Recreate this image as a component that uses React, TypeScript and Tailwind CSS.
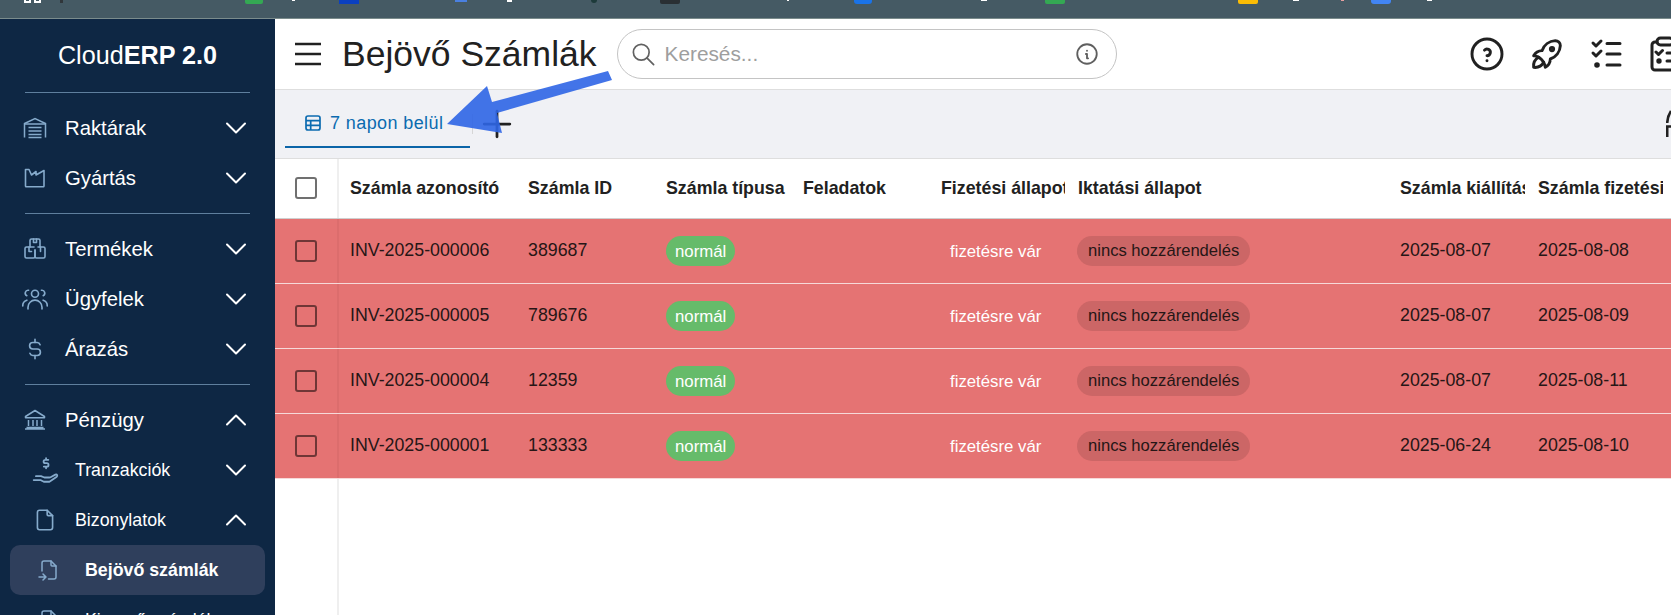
import React from 'react';
import { ChevronDown, ChevronUp } from 'lucide-react';
import {
  TbCurrencyDollar,
  TbFile,
  TbFileImport,
  TbHelpCircle,
  TbInfoCircle,
  TbPlus,
  TbRocket,
  TbSearch,
} from 'react-icons/tb';

const WarehouseIcon = () => (
  <svg width="24" height="24" viewBox="0 0 24 24" fill="none" stroke="currentColor" strokeWidth="1.5">
    <path d="M1.5 21.500V7.500L12 2.500l10.500 5v14" />
    <path d="M1.500 8h21M5.500 11.500h13M5.500 15h13M5.500 18.500h13M5.500 21.500h13" />
  </svg>
);

const FactoryIcon = () => (
  <svg width="24" height="24" viewBox="0 0 24 24" fill="none" stroke="currentColor" strokeWidth="1.6" strokeLinejoin="round">
    <path d="M2.500 20V3.500h3.500l2.500 5.500 4.500-3.500v3.500l8-4.500V20a.8.8 0 0 1-.8.800H3.300a.8.8 0 0 1-.8-.8z" />
  </svg>
);

const PackagesIcon = () => (
  <svg width="24" height="24" viewBox="0 0 24 24" fill="none" stroke="currentColor" strokeWidth="1.6" strokeLinecap="round" strokeLinejoin="round">
    <path d="M7 10V3.500A1.500 1.500 0 0 1 8.500 2h7A1.500 1.500 0 0 1 17 3.500V10" />
    <path d="M10.500 2v3.500h3V2" />
    <path d="M11 10H3.500A1.500 1.500 0 0 0 2 11.500v8A1.500 1.500 0 0 0 3.500 21h7a1.500 1.500 0 0 0 1.500-1.500V13" />
    <path d="M12 13v6.500a1.500 1.500 0 0 0 1.500 1.500h7a1.500 1.500 0 0 0 1.500-1.500v-8A1.500 1.500 0 0 0 20.500 10H15" />
    <path d="M6 10v4.500h2.500M17.500 10v4.500" />
  </svg>
);

const UsersIcon = () => (
  <svg width="28" height="28" viewBox="0 0 24 24" fill="none" stroke="currentColor" strokeWidth="1.4" strokeLinecap="round" strokeLinejoin="round">
    <circle cx="12" cy="7.500" r="3" />
    <path d="M6 20.500v-1.500a6 6 0 0 1 12 0v1.500" />
    <path d="M6.500 4.500a2.500 2.500 0 0 0-1.500 4.700M17.500 4.500a2.500 2.500 0 0 1 1.500 4.700" />
    <path d="M1.500 18a5 5 0 0 1 3.500-5M22.500 18a5 5 0 0 0-3.500-5" />
  </svg>
);

const BankIcon = () => (
  <svg width="24" height="24" viewBox="0 0 24 24" fill="none" stroke="currentColor" strokeWidth="1.5" strokeLinejoin="round">
    <path d="M2.500 8.500 12 2.500l9.500 6v1.200h-19z" />
    <path d="M5.500 12v6M10 12v6M14 12v6M18.500 12v6" />
    <path d="M2 21h20M3.500 19.500h17" />
  </svg>
);

const HandCoinIcon = () => (
  <svg width="27" height="27" viewBox="0 0 24 24" fill="none" stroke="currentColor" strokeWidth="1.6" strokeLinecap="round" strokeLinejoin="round">
    <path d="M14.500 2.500h-2.700a1.400 1.400 0 0 0 0 3h1.400a1.400 1.400 0 0 1 0 3h-2.700M12.500 1v1.500M12.500 8.500V10" />
    <path d="M1.500 20.500h6l3 1.500h5l6.500-4.500c1-1 .2-2.500-1.200-1.800l-4.300 2.300" />
    <path d="M3.500 17h4.500l3 1.200h4.500" />
  </svg>
);

const TableIcon = () => (
  <svg width="20" height="20" viewBox="0 0 20 20" fill="none" stroke="currentColor" strokeWidth="1.700">
    <rect x="3" y="3" width="14" height="14" rx="2" />
    <path d="M3 7.700h14M3 12.300h14M7.700 7.700V17" />
  </svg>
);

const ChecksIcon = () => (
  <svg width="40" height="40" viewBox="0 0 40 40" fill="none" stroke="currentColor" strokeWidth="3" strokeLinecap="round" strokeLinejoin="round">
    <path d="M6 9l3 3 5-5M6 19l3 3 5-5" />
    <path d="M20 9.500h13M20 20h13M20 31h13" />
    <circle cx="10" cy="31" r="1.300" fill="currentColor" />
  </svg>
);

const ClipboardIcon = () => (
  <svg width="40" height="40" viewBox="0 0 40 40" fill="none" stroke="currentColor" strokeWidth="3" strokeLinecap="round" strokeLinejoin="round">
    <path d="M10 8H8a3 3 0 0 0-3 3v22a3 3 0 0 0 3 3h20a3 3 0 0 0 3-3V11a3 3 0 0 0-3-3h-2" />
    <rect x="10" y="4" width="16" height="7" rx="3.500" />
    <path d="M9 18l2.500 2.500 4-4M20 19h8M20 27h8" />
    <circle cx="12" cy="27" r="1.200" fill="currentColor" />
  </svg>
);

const Divider = () => <div className="mx-[25px] h-px bg-[#5f7f9e]" />;

interface NavRowProps {
  icon: React.ReactNode;
  label: string;
  open?: boolean;
  sub?: boolean;
}

const NavRow: React.FC<NavRowProps> = ({ icon, label, open, sub }) => (
  <div className="flex h-[50px] items-center pr-[21px] text-white">
    <div className={sub ? 'flex w-[75px] shrink-0 justify-center pl-[15px] text-[#86abcc]' : 'flex w-[65px] shrink-0 justify-center pl-[5px] text-[#86abcc]'}>
      {icon}
    </div>
    <span className={sub ? 'flex-1 text-[17.800px]' : 'flex-1 text-[20.300px]'}>{label}</span>
    {open ? <ChevronUp size={36} strokeWidth={1.33} /> : <ChevronDown size={36} strokeWidth={1.33} />}
  </div>
);

const Sidebar = () => (
  <aside className="h-full w-[275px] shrink-0 overflow-hidden bg-[#0e2744]">
    <div className="flex h-[73px] items-center justify-center text-[25.200px] text-white">
      Cloud<b>ERP 2.0</b>
    </div>
    <Divider />
    <div className="pt-[10px] pb-[10px]">
      <NavRow icon={<WarehouseIcon />} label="Raktárak" />
      <NavRow icon={<FactoryIcon />} label="Gyártás" />
    </div>
    <Divider />
    <div className="pt-[10px] pb-[10px]">
      <NavRow icon={<PackagesIcon />} label="Termékek" />
      <NavRow icon={<UsersIcon />} label="Ügyfelek" />
      <NavRow icon={<TbCurrencyDollar size={26} strokeWidth={1.5} />} label="Árazás" />
    </div>
    <Divider />
    <div className="pt-[10px]">
      <NavRow icon={<BankIcon />} label="Pénzügy" open />
      <NavRow icon={<HandCoinIcon />} label="Tranzakciók" sub />
      <NavRow icon={<TbFile size={26} strokeWidth={1.5} />} label="Bizonylatok" open sub />
      <div className="mx-[10px] flex h-[50px] items-center rounded-[10px] bg-[#2f3f5c] text-[17.800px] font-bold text-white">
        <div className="flex w-[75px] shrink-0 justify-center pl-[2px] text-[#86abcc]">
          <TbFileImport size={24} strokeWidth={1.5} />
        </div>
        Bejövő számlák
      </div>
      <div className="mx-[10px] flex h-[50px] items-center text-[17.800px] text-white">
        <div className="flex w-[75px] shrink-0 justify-center pl-[2px] text-[#86abcc]">
          <TbFile size={24} strokeWidth={1.5} />
        </div>
        Kimenő számlák
      </div>
    </div>
  </aside>
);

const Header = () => (
  <header className="flex h-[71px] shrink-0 items-center border-b border-[#dedede] bg-white pl-5 text-[#212121]">
    <svg width="26" height="24" viewBox="0 0 26 24" fill="none" stroke="currentColor" strokeWidth="2.600" className="shrink-0">
      <path d="M0 2h26M0 12h26M0 22h26" />
    </svg>
    <h1 className="ml-[21px] whitespace-nowrap pt-[2px] text-[35.500px] leading-none">Bejövő Számlák</h1>
    <div className="ml-[20px] flex h-[50px] w-[500px] shrink-0 items-center rounded-full border border-[#c4c4c4] pr-4 pl-[12px]">
      <TbSearch size={27} strokeWidth={1.5} className="text-[#616161]" />
      <span className="ml-[8px] flex-1 text-[20.800px] text-[#9e9e9e]">Keresés...</span>
      <TbInfoCircle size={26} strokeWidth={1.7} className="text-[#5f5f5f]" />
    </div>
    <div className="mr-[-16px] ml-auto flex shrink-0 items-center gap-5">
      <TbHelpCircle size={40} strokeWidth={1.75} />
      <TbRocket size={40} strokeWidth={1.75} />
      <ChecksIcon />
      <ClipboardIcon />
    </div>
  </header>
);

const Tabs = () => (
  <div className="flex h-[69px] shrink-0 items-center justify-between overflow-hidden border-b border-[#dedede] bg-[#f0f1f5] pl-[10px]">
    <div className="flex items-center">
      <div className="flex h-[48px] w-[185px] items-center border-b-2 border-[#0b65a8] pl-[18px] text-[#0b6bb0]">
        <TableIcon />
        <span className="ml-[7px] text-[18px] tracking-[0.4px]">7 napon belül</span>
      </div>
      <div className="ml-[2px] h-5 w-px bg-[#d6d6d6]" />
      <TbPlus size={44} strokeWidth={1.5} className="ml-[2px] shrink-0 text-[#212121]" />
    </div>
    <svg width="5" height="28" viewBox="0 0 5 28" fill="none" stroke="#212121" strokeWidth="2.600" className="shrink-0">
      <path d="M1.200 13C1.500 8 3 4 5 1M1.200 27V16.500H5" />
    </svg>
  </div>
);

const gridCols = 'grid grid-cols-[64px_176px_138px_137px_138px_137px_322px_138px_138px_1fr]';

const columns = [
  'Számla azonosító',
  'Számla ID',
  'Számla típusa',
  'Feladatok',
  'Fizetési állapot',
  'Iktatási állapot',
  'Számla kiállítás dátuma',
  'Számla fizetési határideje',
];

const invoices = [
  ['INV-2025-000006', '389687', '2025-08-07', '2025-08-08'],
  ['INV-2025-000005', '789676', '2025-08-07', '2025-08-09'],
  ['INV-2025-000004', '12359', '2025-08-07', '2025-08-11'],
  ['INV-2025-000001', '133333', '2025-06-24', '2025-08-10'],
];

const Checkbox = ({ className }: { className: string }) => (
  <div className={`h-[22px] w-[22px] rounded-[3px] border-[2.5px] ${className}`} />
);

const InvoiceTable = () => (
  <div className="flex min-h-0 flex-1 flex-col bg-white">
    <div className={`${gridCols} h-[60px] shrink-0 items-center border-b border-[#cfcfcf] text-[17.800px] font-bold text-[#212121]`}>
      <div className="flex h-full items-center justify-center border-r-2 border-[#efefef] pb-[2px]">
        <Checkbox className="border-[#707070]" />
      </div>
      {columns.map((col, i) => (
        <div key={col} className={i === 0 ? 'overflow-hidden whitespace-nowrap pl-[11px]' : 'overflow-hidden whitespace-nowrap pl-[13px]'}>
          {col}
        </div>
      ))}
      <div />
    </div>
    {invoices.map(([id, num, issued, due]) => (
      <div key={id} className={`${gridCols} h-[65px] shrink-0 items-center border-b border-[#f6d9d9] bg-[#e57373] text-[17.800px] text-[#261616]`}>
        <div className="flex h-full items-center justify-center border-r-2 border-[#dc6d6d]">
          <Checkbox className="border-[#6f3636]" />
        </div>
        <div className="pb-[2px] pl-[11px]">{id}</div>
        <div className="pb-[2px] pl-[13px]">{num}</div>
        <div className="pl-[13px]">
          <span className="inline-flex h-[30px] items-center rounded-full bg-[#66bb6a] px-[9px] pt-[1px] text-[16.800px] text-white">normál</span>
        </div>
        <div />
        <div className="pl-[12px]">
          <span className="inline-flex h-[30px] items-center px-[10px] pt-[1px] text-[16.800px] text-white">fizetésre vár</span>
        </div>
        <div className="pl-[12px]">
          <span className="inline-flex h-[30px] items-center rounded-full bg-[#cc6666] px-[11px] pt-[1px] text-[16.600px]">nincs hozzárendelés</span>
        </div>
        <div className="pb-[2px] pl-[13px]">{issued}</div>
        <div className="pb-[2px] pl-[13px]">{due}</div>
        <div />
      </div>
    ))}
    <div className="w-[64px] flex-1 border-r-2 border-[#efefef]" />
  </div>
);

const App = () => (
  <div className="relative flex h-screen flex-col overflow-hidden bg-white font-['Liberation_Sans',Arial,sans-serif]">
    {/* Browser bookmark bar, only the bottom edge of its icons is visible */}
    <div className="relative h-[19px] shrink-0 border-b border-[#7b8c8c] bg-[#455a64]">
      <div className="absolute left-[24px] top-0 h-[3px] w-[7px] border-x-2 border-b-2 border-white" />
      <div className="absolute left-[34px] top-0 h-[3px] w-[7px] border-x-2 border-b-2 border-white" />
      <div className="absolute left-[60px] top-0 h-[3px] w-[3px] bg-[#30363a]" />
      <div className="absolute left-[245px] top-0 h-[4px] w-[18px] rounded-b-[2px] bg-[#34a853]" />
      <div className="absolute left-[292px] top-0 h-[1px] w-[3px] bg-white" />
      <div className="absolute left-[339px] top-0 h-[4px] w-[20px] bg-[#0b40c0]" />
      <div className="absolute left-[455px] top-0 h-[2px] w-[12px] bg-[#4a80e0]" />
      <div className="absolute left-[507px] top-0 h-[2px] w-[5px] bg-white" />
      <div className="absolute left-[591px] top-0 h-[3px] w-[6px] rounded-b-full bg-[#1d3a3a]" />
      <div className="absolute left-[660px] top-0 h-[4px] w-[20px] rounded-b-[2px] bg-[#2a2f33]" />
      <div className="absolute left-[787px] top-0 h-[1px] w-[2px] bg-white" />
      <div className="absolute left-[854px] top-0 h-[4px] w-[18px] rounded-b-[3px] bg-[#1a73e8]" />
      <div className="absolute left-[981px] top-0 h-[1px] w-[6px] bg-white" />
      <div className="absolute left-[1045px] top-0 h-[4px] w-[20px] rounded-b-[2px] bg-[#34a853]" />
      <div className="absolute left-[1238px] top-0 h-[4px] w-[20px] rounded-b-[2px] bg-[#fbbc04]" />
      <div className="absolute left-[1293px] top-0 h-[1px] w-[6px] bg-white" />
      <div className="absolute left-[1341px] top-0 h-[1px] w-[3px] bg-[#e8a0a0]" />
      <div className="absolute left-[1371px] top-0 h-[4px] w-[20px] rounded-b-[3px] bg-[#4285f4]" />
      <div className="absolute left-[1427px] top-0 h-[1px] w-[5px] bg-white" />
    </div>
    <div className="flex min-h-0 flex-1">
      <Sidebar />
      <main className="flex min-w-0 flex-1 flex-col overflow-hidden">
        <Header />
        <Tabs />
        <InvoiceTable />
      </main>
    </div>
    {/* Annotation arrow drawn over the screenshot */}
    <svg className="absolute left-[440px] top-[60px] opacity-90" width="180" height="80" viewBox="440 60 180 80">
      <polygon points="608,71 612,80 497,113 502,133 447,124 487,86 492,102" fill="#2f66e6" />
    </svg>
  </div>
);

export default App;
